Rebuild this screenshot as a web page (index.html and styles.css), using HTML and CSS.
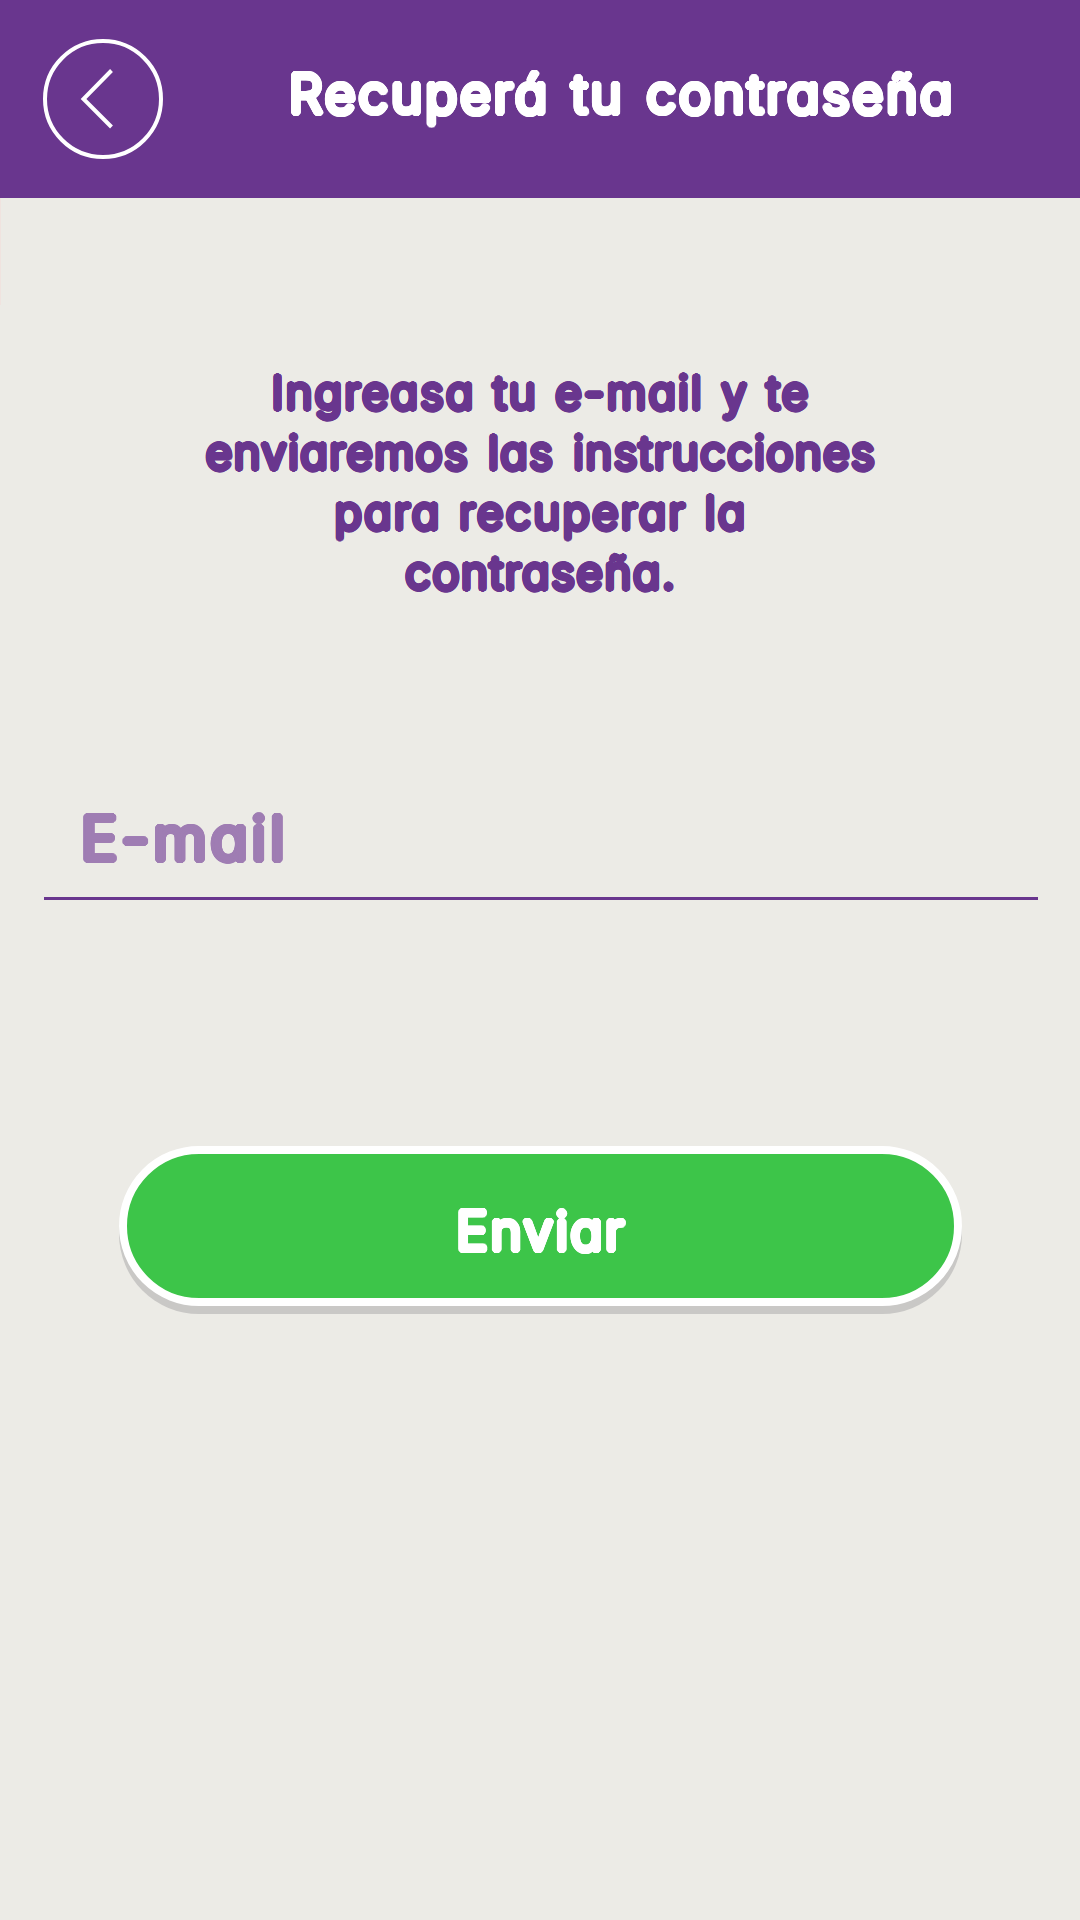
FILE: index.html
```html
<!DOCTYPE html>
<html lang="es">
<head>
<meta charset="utf-8">
<title>Recuperá tu contraseña</title>
<link rel="stylesheet" href="styles.css">
</head>
<body>
<header class="topbar">
  <button class="back" type="button" aria-label="Volver">
    <svg viewBox="0 0 120 120" width="120" height="120" fill="none" stroke="currentColor" stroke-width="4">
      <circle cx="60" cy="60" r="58"/>
      <path d="M68.5 31.5 40.5 60l28 28"/>
    </svg>
  </button>
  <h1 class="title">Recuperá tu contraseña</h1>
</header>
<main class="content">
  <p class="intro">
    <span class="line line-1">Ingreasa tu e-mail y te</span>
    <span class="line line-2">enviaremos las instrucciones</span>
    <span class="line line-3">para recuperar la</span>
    <span class="line line-4">contraseña.</span>
  </p>
  <form class="form">
    <input class="field" type="email" placeholder="E-mail" aria-label="E-mail">
    <button class="submit" type="button">Enviar</button>
  </form>
</main>
</body>
</html>
```
FILE: styles.css
```css
* { box-sizing: border-box; }

body {
  margin: 0;
  min-height: 1920px;
  background: #ecebe6;
  color: #69368e;
  font-family: Inter, "Open Sans", sans-serif;
  font-weight: 300;
  font-feature-settings: "cv11", "ss03";
}

button, input { font: inherit; font-feature-settings: inherit; }

/* thickens light strokes evenly, giving the letters rounded ends */
.title, .intro, .field::placeholder, .submit {
  text-shadow:
    .056em 0, .052em .021em, .039em .039em, .021em .052em,
    0 .056em, -.021em .052em, -.039em .039em, -.052em .021em,
    -.056em 0, -.052em -.021em, -.039em -.039em, -.021em -.052em,
    0 -.056em, .021em -.052em, .039em -.039em, .052em -.021em,
    .028em 0, -.028em 0, 0 .028em, 0 -.028em;
}

.topbar {
  display: flex;
  align-items: flex-start;
  height: 198px;
  padding-left: 43px;
  background: #69368e;
  color: #fff;
}

.back {
  width: 120px;
  height: 120px;
  margin-top: 39px;
  padding: 0;
  border: 0;
  background: none;
  color: inherit;
}

.back svg { display: block; }

.title {
  margin: 54px 0 0 126px;
  font-size: 53px;
  font-weight: 300;
  line-height: 80px;
  white-space: nowrap;
  word-spacing: 4px;
  letter-spacing: 2.95px;
}

.content {
  display: flex;
  flex-direction: column;
  background: linear-gradient(#f0e3df, #f0e3df) 0 0 / 1px 107px no-repeat;
}

.intro {
  margin: 165px 0 0;
  padding-left: 2px;
  font-size: 45.3px;
  line-height: 60px;
  text-align: center;
}

.line { display: block; white-space: nowrap; }
.line-1 { letter-spacing: 2.3px; word-spacing: 2.5px; }
.line-2 { letter-spacing: 1.65px; word-spacing: 4.6px; }
.line-3 { letter-spacing: 2.4px; word-spacing: 2.5px; }
.line-4 { letter-spacing: 1.8px; }

.form {
  display: flex;
  flex-direction: column;
  padding: 182px 42px 0 44px;
}

.field {
  width: 994px;
  height: 115px;
  padding: 0 0 6px 37px;
  border: 0;
  border-bottom: 3px solid #69368e;
  outline: 0;
  background: none;
  font-size: 61px;
  letter-spacing: 4.2px;
}

.field::placeholder { color: #9f7db3; opacity: 1; }

.submit {
  width: 843px;
  height: 160px;
  margin: 246px 0 0 75px;
  padding: 10px 0 0 2px;
  border: 8px solid #fff;
  border-radius: 80px;
  background: #3dc549;
  box-shadow: 0 8px 0 #c9c8c6;
  color: #fff;
  font-size: 53px;
  letter-spacing: 2.6px;
}
```
